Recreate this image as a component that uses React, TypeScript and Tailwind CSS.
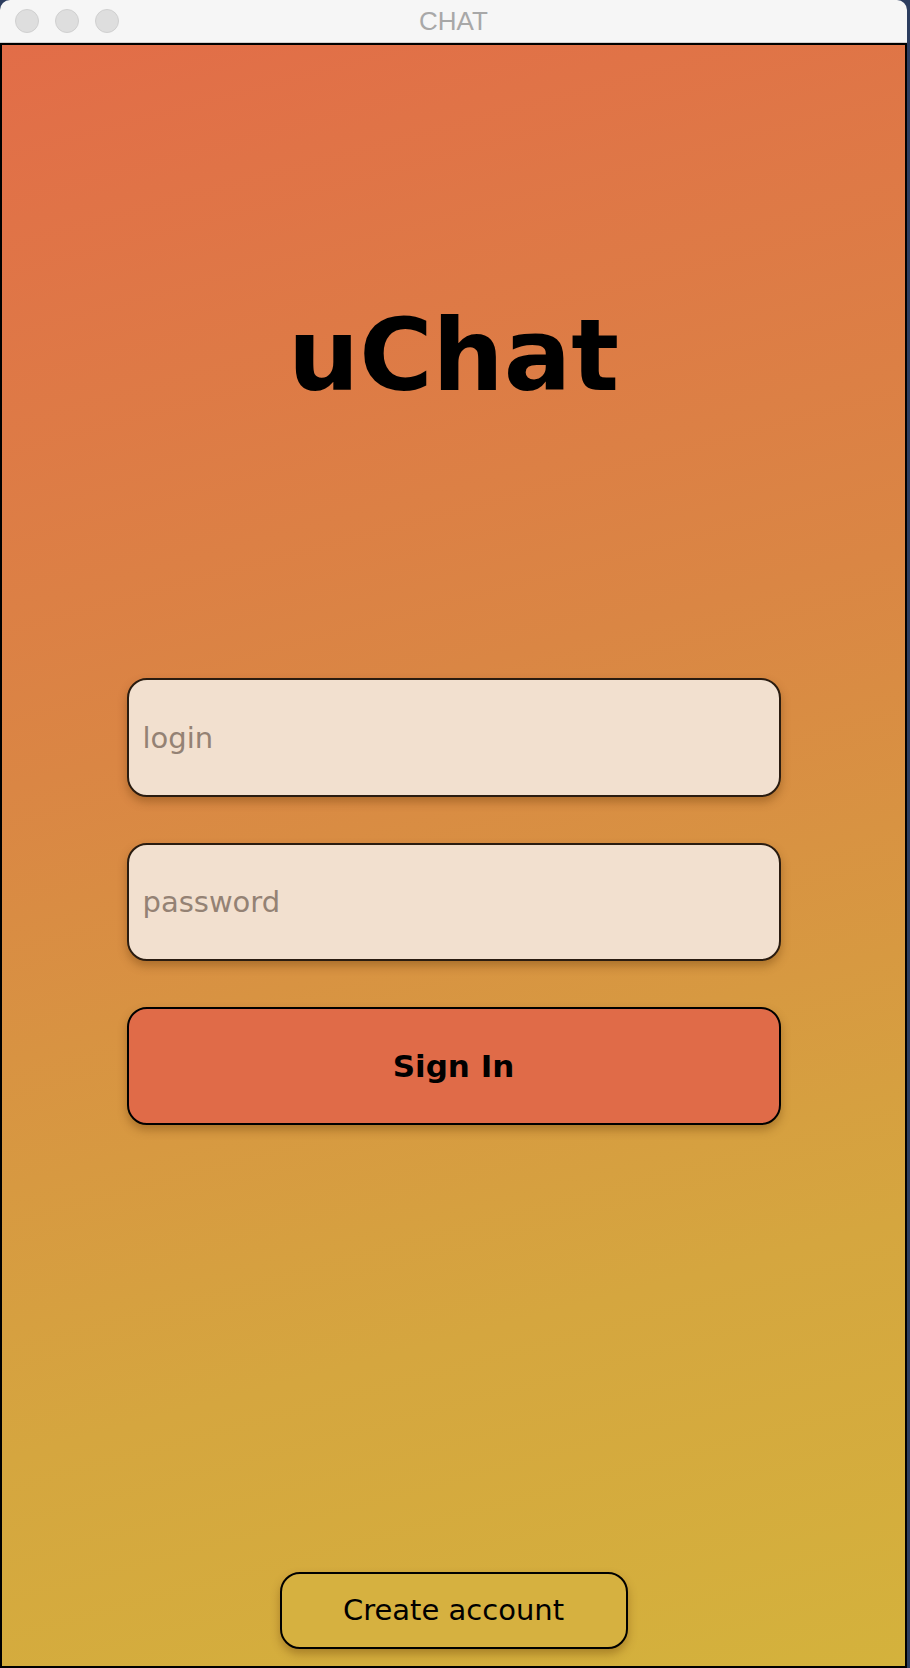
import React from "react";

export default function App() {
  return (
    <div className="w-[910px] h-[1668px] bg-[#2c3d5f] flex" style={{ fontFamily: '"DejaVu Sans", Verdana, sans-serif' }}>
      <div className="w-[907px] h-full flex flex-col">
        {/* title bar */}
        <div className="relative h-[43px] shrink-0 bg-[#f6f6f6] rounded-t-[10px] border-b border-[#cfcfcf] flex items-center">
          <div className="flex items-center gap-[16px] pl-[15px]">
            <span className="w-[24px] h-[24px] rounded-full bg-[#dedede] border border-[#d0d0d0]" />
            <span className="w-[24px] h-[24px] rounded-full bg-[#dedede] border border-[#d0d0d0]" />
            <span className="w-[24px] h-[24px] rounded-full bg-[#dedede] border border-[#d0d0d0]" />
          </div>
          <div
            className="absolute inset-0 flex items-center justify-center text-[26px] text-[#a8a8a8]"
            style={{ fontFamily: '"Liberation Sans", Arial, sans-serif' }}
          >
            CHAT
          </div>
        </div>
        {/* content */}
        <div className="flex-1 flex flex-col items-center border-2 border-black bg-[linear-gradient(165deg,#e26d48_0%,#da8644_40%,#d5a63f_76%,#d4b23c_100%)]">
          <div className="mt-[261px] text-[100px] leading-[100px] font-bold text-black">uChat</div>
          <div className="mt-[272px] flex flex-col gap-[46px]">
            <input
              placeholder="login"
              className="w-[654px] h-[119px] rounded-[20px] border-2 border-[#2a1c10] bg-[#f2e0cf] px-[14px] text-[29px] text-black placeholder:text-[#948274] outline-none shadow-[0_5px_10px_rgba(90,45,0,0.35)]"
            />
            <input
              placeholder="password"
              className="w-[654px] h-[118px] rounded-[20px] border-2 border-[#2a1c10] bg-[#f2e0cf] px-[14px] text-[29px] text-black placeholder:text-[#948274] outline-none shadow-[0_5px_10px_rgba(90,45,0,0.35)]"
            />
            <button className="w-[654px] h-[118px] rounded-[20px] border-2 border-black bg-[#e06b48] text-[31px] font-bold text-black shadow-[0_5px_10px_rgba(90,45,0,0.35)]">
              Sign In
            </button>
          </div>
          <div className="flex-1" />
          <button className="mb-[17px] w-[348px] h-[77px] rounded-[20px] border-2 border-black bg-[#d6b140] text-[29px] text-black shadow-[0_5px_10px_rgba(90,45,0,0.35)]">
            Create account
          </button>
        </div>
      </div>
    </div>
  );
}
